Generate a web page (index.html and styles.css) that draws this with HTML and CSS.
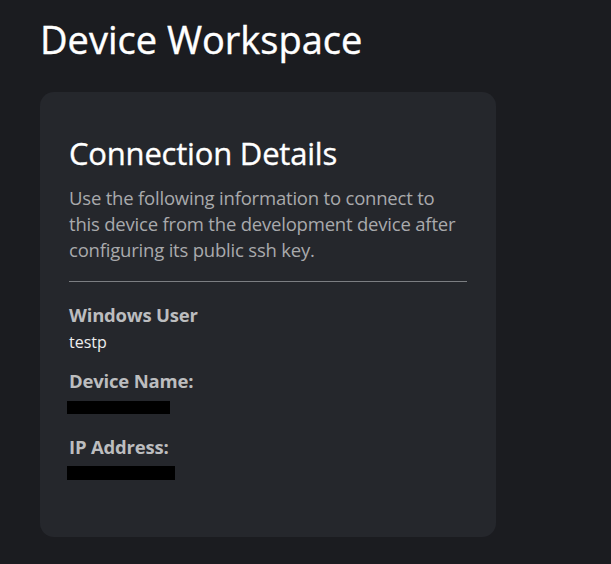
FILE: index.html
```html
<!DOCTYPE html>
<html>
<head>
<meta charset="utf-8">
<link rel="stylesheet" href="styles.css">
</head>
<body>
<main class="page">
  <h1 class="page-title">Device Workspace</h1>
  <section class="card">
    <h2 class="card-title">Connection Details</h2>
    <p class="card-desc">Use the following information to connect to this device from the development device after configuring its public ssh key.</p>
    <hr class="divider">
    <dl class="details">
      <div class="detail">
        <dt class="label">Windows User</dt>
        <dd class="value value-text">testp</dd>
      </div>
      <div class="detail">
        <dt class="label">Device Name:</dt>
        <dd class="value"><span class="redacted redacted-name"></span></dd>
      </div>
      <div class="detail">
        <dt class="label">IP Address:</dt>
        <dd class="value"><span class="redacted redacted-ip"></span></dd>
      </div>
    </dl>
  </section>
</main>
</body>
</html>
```

FILE: styles.css
```css
html, body {
  margin: 0;
  padding: 0;
  background: #1b1c20;
  height: 100%;
}
body {
  font-family: "Open Sans", "Noto Sans", sans-serif;
  color: #ffffff;
}
.page {
  padding: 13px 40px 0 40px;
}
.page-title {
  margin: 0;
  font-size: 38px;
  font-weight: 400;
  line-height: 52px;
  color: #ffffff;
  letter-spacing: 0;
  -webkit-text-stroke: 0.4px #ffffff;
}
.card {
  margin-top: 27px;
  width: 456px;
  height: 445px;
  box-sizing: border-box;
  background: #25272c;
  border-radius: 14px;
  padding: 40px 29px 0 29px;
}
.card-title {
  margin: 0;
  font-size: 31px;
  font-weight: 400;
  line-height: 42px;
  letter-spacing: -0.2px;
  -webkit-text-stroke: 0.35px #ffffff;
}
.card-desc {
  margin: 11px 0 0 0;
  font-size: 18.5px;
  line-height: 26px;
  color: #a9aaac;
  letter-spacing: -0.2px;
}
.divider {
  margin: 18px 0 0 0;
  border: 0;
  border-top: 1px solid #7c7e82;
  height: 0;
}
.details {
  margin: 20px 0 0 0;
  display: flex;
  flex-direction: column;
  gap: 14px;
}
.detail {
  display: flex;
  flex-direction: column;
}
.label {
  font-size: 18.5px;
  font-weight: 700;
  line-height: 26px;
  color: #bcbdbf;
  letter-spacing: -0.2px;
}
.value {
  margin: 0;
  font-size: 16px;
  line-height: 26px;
  color: #eeeeee;
  height: 26px;
  display: flex;
  align-items: center;
}
.value-text {
  padding-top: 2px;
  height: 24px;
}
.redacted {
  display: block;
  background: #000;
  height: 13px;
  margin-left: -2px;
}
.redacted-name { width: 103px; }
.redacted-ip { width: 108px; height: 14px; }
```
